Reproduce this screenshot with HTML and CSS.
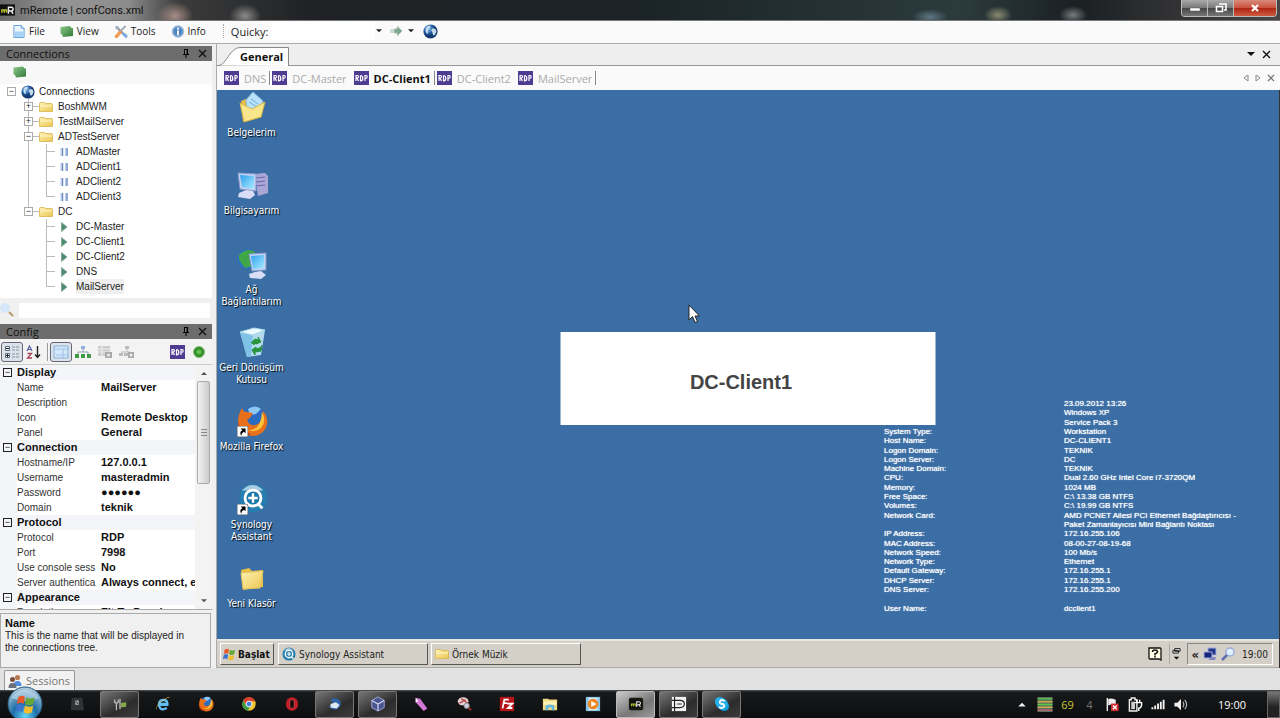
FILE: index.html
```html
<!DOCTYPE html>
<html lang="tr">
<head>
<meta charset="utf-8">
<title>mRemote | confCons.xml</title>
<link rel="stylesheet" href="styles.css">
</head>
<body>
<svg class="sprite" aria-hidden="true">
  <defs>
    <linearGradient id="folder-fill" x1="0" y1="0" x2="1" y2="1"><stop offset="0" stop-color="#fdf3b4"/><stop offset="1" stop-color="#ecc650"/></linearGradient>
    <radialGradient id="globe-fill" cx=".35" cy=".3"><stop offset="0" stop-color="#9fc8f0"/><stop offset=".6" stop-color="#2b66ad"/><stop offset="1" stop-color="#123a70"/></radialGradient>
    <linearGradient id="green-fill" x1="0" y1="0" x2="1" y2="1"><stop offset="0" stop-color="#8cc78a"/><stop offset="1" stop-color="#2f7a35"/></linearGradient>
    <linearGradient id="screen-fill" x1="0" y1="0" x2="1" y2="1"><stop offset="0" stop-color="#2fa0ee"/><stop offset="1" stop-color="#a9ecff"/></linearGradient>
    <radialGradient id="orb-fill" cx=".5" cy=".85" r=".8"><stop offset="0" stop-color="#5fd6f6"/><stop offset=".45" stop-color="#1d6ea8"/><stop offset="1" stop-color="#a9c6d8"/></radialGradient>
  </defs>
  <symbol id="folder" viewBox="0 0 14 12"><path d="M.5 2.5q0-1 1-1h4l1 1h6q1 0 1 1v7h-13z" fill="url(#folder-fill)" stroke="#d9b34d" stroke-width=".8"/><path d="M1 5h12" stroke="#fff6c6"/></symbol>
  <symbol id="globe" viewBox="0 0 14 14"><circle cx="7" cy="7" r="6.600" fill="url(#globe-fill)"/><path d="M2.500 4q1.500-2.500 4-2.600l.4 1.600L4.500 5.500 5 7.500 4 9.500 2.500 7zM9 4l2.600.6 1 2.400-1.400 3-1.700.8-.8-3-1-1.800z" fill="#c4dbec"/></symbol>
  <symbol id="pause" viewBox="0 0 10 10"><path d="M1.500 1h3v8h-3zM6 1h3v8H6z" fill="#b7cbed"/><path d="M3.500 1v8M8 1v8" stroke="#718bbb"/></symbol>
  <symbol id="play" viewBox="0 0 10 10"><path d="M2.500.5 8 5 2.500 9.500z" fill="#4b8b6d" stroke="#87a99a"/></symbol>
  <symbol id="rdp" viewBox="0 0 15 14"><path d="M0 0h15v14H0z" fill="#4d3c91"/><path d="M2 10V4.500h1.500q1 0 1 1.200T3 7l1.500 3M6.500 4.500V10q2.300 0 2.300-2.700T6.500 4.500M11 10V4.500h1.200q1 0 1 1.400T11 7.400" fill="none" stroke="#fff" stroke-width="1.200"/></symbol>
  <symbol id="green-box" viewBox="0 0 14 12"><path d="M.5 1.500 10 .5l1.500 2H13v8L3 11.500 2 9 .5 8z" fill="url(#green-fill)"/></symbol>
  <symbol id="pin" viewBox="0 0 8 9"><path d="M2 0h4v5h1v1H4.500v3h-1V6H1V5h1z"/><path d="M3 1h1.500v4H3z" fill="#858585"/></symbol>
  <symbol id="cross" viewBox="0 0 9 9"><path d="m1 1 7 7M8 1 1 8" fill="none" stroke="currentColor" stroke-width="1.400"/></symbol>
  <symbol id="down" viewBox="0 0 8 5"><path d="M0 0h8L4 4z" fill="currentColor"/></symbol>
  <symbol id="shortcut" viewBox="0 0 9 9"><path d="M0 0h9v9H0z" fill="#fff" stroke="#333" stroke-width=".6"/><path d="M3 2h4v4L5.700 4.700Q3.500 5.500 3.500 8 1.500 5 4.400 3.400z"/></symbol>
  <symbol id="firefox" viewBox="0 0 32 32"><circle cx="17" cy="14" r="12.500" fill="#2c6cc0"/><path d="M12 4q7-5 13 0l-5 5-6 1z" fill="#8cc8f4"/><path d="M6 3q1 4 5 4l6 1-3 5-3 2q2 6 8 5 5-1 7-6l1-8q5 5 4 13-2 11-14 12Q3 30 2 18 2 9 6 3z" fill="#e8701a"/><path d="M26 7q5 9-1 16-6 5-13 2 13 1 14-18z" fill="#fbc43c"/><path d="M2 16q2 11 13 13-8 3-12-5z" fill="#b6350c"/></symbol>
  <symbol id="xp-flag" viewBox="0 0 16 14"><path d="M3 2q3-2 5 0L7 7Q5 5 2 7z" fill="#e35b2b"/><path d="M9 2q3 2 6 0l-1 5q-3 2-6 0z" fill="#65a836"/><path d="M2 8q3-2 5 0l-1 5q-3-2-5 0z" fill="#3c74cf"/><path d="M8 8q3 2 6 0l-1 5q-3 2-6 0z" fill="#f1bd2c"/></symbol>
  <symbol id="syno" viewBox="0 0 32 32"><circle cx="16" cy="16" r="15" fill="#267eaf"/><path d="M4 8Q15-4 27 8z" fill="#a9cbe2"/><circle cx="16" cy="16" r="8.500" fill="#1a78ab" stroke="#fff" stroke-width="3"/><path d="M16 11v10M11 16h10" stroke="#fff" stroke-width="2.600"/><path d="m21 22 5 5" stroke="#fff" stroke-width="3"/></symbol>
  <symbol id="mr" viewBox="0 0 16 12"><path d="M0 0h16v12H0z" fill="#111"/><path d="M2 9V6h5v3M4.500 6v3" fill="none" stroke="#b3bd2b" stroke-width="1.600"/><path d="M9 10V3h3q2 0 2 2t-2 2H9m3 0 2 3" fill="none" stroke="#eee" stroke-width="1.500"/></symbol>
</svg>

<header class="titlebar">
  <svg class="app-mark"><use href="#mr"/></svg>
  <h1>mRemote | confCons.xml</h1>
  <div class="window-buttons">
    <button aria-label="Minimize"><svg viewBox="0 0 12 10"><path d="M1 5h10v3H1z" fill="#fff" stroke="#555" stroke-width=".5"/></svg></button>
    <button aria-label="Restore"><svg viewBox="0 0 12 10"><path d="M4 1h7v6H9M1.500 3.500h6v5h-6z" fill="none" stroke="#fff" stroke-width="1.600"/></svg></button>
    <button class="close" aria-label="Close"><svg viewBox="0 0 12 10"><path d="m3 2 6 6M9 2 3 8" stroke="#fff" stroke-width="2.200"/></svg></button>
  </div>
</header>

<nav class="toolbar">
  <button class="menu"><svg viewBox="0 0 14 14"><path d="M1.500.5h8l3 3v10h-11z" fill="#e9f5ff" stroke="#5b9bd8"/><path d="M2.500 7h9v6h-9z" fill="#a8d2f6"/><path d="M9.500.5v3h3" fill="#fff" stroke="#5b9bd8"/></svg>File</button>
  <button class="menu"><svg><use href="#green-box"/></svg>View</button>
  <button class="menu"><svg viewBox="0 0 14 14"><path d="m3 3 8.500 8.500" stroke="#8e9aaa" stroke-width="2.500"/><path d="M1 1v3l2 1 2-2-1-2M13 13l1-2-2-2-2 2z" fill="#a8b1bd"/><path d="m12 1-7 7" stroke="#9da5b0" stroke-width="2"/><path d="m6 8-4 4.500" stroke="#ef9b56" stroke-width="3.500" stroke-linecap="round"/><path d="m10 10 2.500 2.500" stroke="#7daee6" stroke-width="3" stroke-linecap="round"/></svg>Tools</button>
  <button class="menu"><svg viewBox="0 0 14 14"><circle cx="7" cy="7" r="6.200" fill="#6f9ed2" stroke="#a5bcd6"/><circle cx="7" cy="7" r="4" fill="#4d82c0"/><path d="M7 3v2M7 6v5" stroke="#fff" stroke-width="2"/></svg>Info</button>
  <span class="grip"></span>
  <label for="quicky">Quicky:</label>
  <input id="quicky" type="text">
  <button class="caret" aria-label="Quicky history"><svg><use href="#down"/></svg></button>
  <button class="go" aria-label="Connect"><svg viewBox="0 0 13 10"><path d="M1 3v4M3 3v4" stroke="#9cbfa8"/><path d="M4.500 3h3V.5L12 5 7.500 9.500V7h-3z" fill="#78a98a" stroke="#a4b8ab"/></svg></button>
  <button class="caret" aria-label="Connect options"><svg><use href="#down"/></svg></button>
  <button class="world" aria-label="Protocol"><svg><use href="#globe"/></svg></button>
</nav>

<main class="workspace">
  <aside class="side">
    <section class="panel">
      <header class="panel-head"><h2>Connections</h2><button aria-label="Pin Connections"><svg class="pin"><use href="#pin"/></svg></button><button aria-label="Close Connections"><svg class="x"><use href="#cross"/></svg></button></header>
      <div class="tree-tools"><button aria-label="View options"><svg><use href="#green-box"/></svg></button></div>
      <div class="tree">
        <div class="node root"><button class="toggle" aria-label="Collapse">−</button><svg class="globe"><use href="#globe"/></svg>Connections</div>
        <ul class="folders">
          <li><div class="node"><button class="toggle" aria-label="Expand">+</button><svg class="dir"><use href="#folder"/></svg>BoshMWM</div></li>
          <li><div class="node"><button class="toggle" aria-label="Expand">+</button><svg class="dir"><use href="#folder"/></svg>TestMailServer</div></li>
          <li><div class="node"><button class="toggle" aria-label="Collapse">−</button><svg class="dir"><use href="#folder"/></svg>ADTestServer</div>
            <ul class="leaves">
              <li><svg><use href="#pause"/></svg>ADMaster</li>
              <li><svg><use href="#pause"/></svg>ADClient1</li>
              <li><svg><use href="#pause"/></svg>ADClient2</li>
              <li><svg><use href="#pause"/></svg>ADClient3</li>
            </ul>
          </li>
          <li><div class="node"><button class="toggle" aria-label="Collapse">−</button><svg class="dir"><use href="#folder"/></svg>DC</div>
            <ul class="leaves">
              <li><svg><use href="#play"/></svg>DC-Master</li>
              <li><svg><use href="#play"/></svg>DC-Client1</li>
              <li><svg><use href="#play"/></svg>DC-Client2</li>
              <li><svg><use href="#play"/></svg>DNS</li>
              <li><svg><use href="#play"/></svg><span class="picked">MailServer</span></li>
            </ul>
          </li>
        </ul>
      </div>
      <div class="search"><svg viewBox="0 0 14 14"><circle cx="5" cy="5" r="5" fill="#d4e6f7"/><path d="m9 9 4 4" stroke="#b89a68" stroke-width="2"/></svg><input type="text" aria-label="Search connections"></div>
    </section>

    <section class="panel config">
      <header class="panel-head"><h2>Config</h2><button aria-label="Pin Config"><svg class="pin"><use href="#pin"/></svg></button><button aria-label="Close Config"><svg class="x"><use href="#cross"/></svg></button></header>
      <div class="config-tools">
        <button class="on" aria-label="Categorized"><svg viewBox="0 0 16 14"><path d="M1.500 1.500h4v4h-4zM1.500 8.500h4v4h-4z" fill="#fff" stroke="#5c6b80"/><path d="M2 3.500h3M2 10.500h3M3.500 9v3" stroke="#222"/><path d="M8 2h3M12 2h3M8 5h3M12 5h3M8 9h3M12 9h3M8 12h3M12 12h3" stroke="#8c93a0"/></svg></button>
        <button aria-label="Alphabetical"><svg viewBox="0 0 16 14"><path d="m1 6 2.500-5L6 6M2 4.500h3" fill="none" stroke="#5a62a5" stroke-width="1.200"/><path d="M1.500 8.500h4l-4 4.500h4.500" fill="none" stroke="#a34356" stroke-width="1.300"/><path d="M11.500 1v11M9 9.500l2.500 3 2.500-3" fill="none" stroke="#222" stroke-width="1.400"/></svg></button>
        <span class="rule"></span>
        <button class="on" aria-label="Properties"><svg viewBox="0 0 16 14"><path d="M1 1h14v12H1z" fill="#d3e8fb" stroke="#89b0da"/><path d="M1 4h14M10 4v9M3 10h12" stroke="#9ec2e6"/></svg></button>
        <button aria-label="Inheritance"><svg viewBox="0 0 16 14"><path d="M6 1h4v3H6z" fill="#8daed8"/><path d="M8 4v3M3 9V7h10v2" fill="none" stroke="#8da0b0"/><path d="M0 9h4v4H0zM6 9h4v4H6zM12 9h4v4h-4z" fill="#3f9a43"/></svg></button>
        <button disabled aria-label="Default properties"><svg viewBox="0 0 16 14"><path d="M1 1h12v10H1z" fill="#ccc"/><path d="M1 4h12M1 7h12M5 1v10" stroke="#eee"/><path d="M8 7h7v6H8z" fill="#aaa"/><circle cx="11.500" cy="10" r="1.500" fill="#eee"/></svg></button>
        <button disabled aria-label="Default inheritance"><svg viewBox="0 0 16 14"><path d="M6 1h4v3H6zM0 8h4v3H0zM5 8h4v3H5z" fill="#bbb"/><path d="M8 4v3M2 7h9" stroke="#bbb"/><path d="M9 7h6v6H9z" fill="#aaa"/><circle cx="12" cy="10" r="1.500" fill="#eee"/></svg></button>
        <button class="push" aria-label="Icon"><svg class="rdp"><use href="#rdp"/></svg></button>
        <button aria-label="Host status"><svg viewBox="0 0 14 14"><circle cx="7" cy="7" r="5.500" fill="#2f9124" stroke="#8bb883"/><circle cx="7" cy="7" r="2.500" fill="#62bd52"/></svg></button>
      </div>
      <div class="props">
        <table>
          <colgroup><col class="gutter"><col class="key"><col></colgroup>
          <tbody>
            <tr class="group"><td><button class="fold" aria-label="Collapse Display">−</button></td><th colspan="2">Display</th></tr>
            <tr><td></td><th>Name</th><td>MailServer</td></tr>
            <tr><td></td><th>Description</th><td></td></tr>
            <tr><td></td><th>Icon</th><td>Remote Desktop</td></tr>
            <tr><td></td><th>Panel</th><td>General</td></tr>
            <tr class="group"><td><button class="fold" aria-label="Collapse Connection">−</button></td><th colspan="2">Connection</th></tr>
            <tr><td></td><th>Hostname/IP</th><td>127.0.0.1</td></tr>
            <tr><td></td><th>Username</th><td>masteradmin</td></tr>
            <tr><td></td><th>Password</th><td>●●●●●●</td></tr>
            <tr><td></td><th>Domain</th><td>teknik</td></tr>
            <tr class="group"><td><button class="fold" aria-label="Collapse Protocol">−</button></td><th colspan="2">Protocol</th></tr>
            <tr><td></td><th>Protocol</th><td>RDP</td></tr>
            <tr><td></td><th>Port</th><td>7998</td></tr>
            <tr><td></td><th>Use console sess</th><td>No</td></tr>
            <tr><td></td><th>Server authentica</th><td>Always connect, e</td></tr>
            <tr class="group"><td><button class="fold" aria-label="Collapse Appearance">−</button></td><th colspan="2">Appearance</th></tr>
            <tr><td></td><th>Resolution</th><td>Fit To Panel</td></tr>
          </tbody>
        </table>
        <div class="scroll">
          <button aria-label="Scroll up"><svg class="up"><use href="#down"/></svg></button>
          <div class="thumb"></div>
          <button aria-label="Scroll down"><svg><use href="#down"/></svg></button>
        </div>
      </div>
      <div class="hint"><strong>Name</strong><p>This is the name that will be displayed in the connections tree.</p></div>
    </section>
  </aside>

  <section class="content">
    <div class="group-tabs"><button class="group-tab"><svg viewBox="0 0 72 19" preserveAspectRatio="none"><path d="M0 18.500h2C9 18 13 .5 23 .5h48.500V19" fill="#fff" stroke="#888"/></svg><span>General</span></button>
      <button class="push" aria-label="Panel list"><svg class="tri"><use href="#down"/></svg></button><button aria-label="Close panel"><svg class="x"><use href="#cross"/></svg></button></div>
    <div class="session-tabs">
      <button class="dns"><svg><use href="#rdp"/></svg>DNS</button>
      <button><svg><use href="#rdp"/></svg>DC-Master</button>
      <button class="active"><svg><use href="#rdp"/></svg>DC-Client1</button>
      <button><svg><use href="#rdp"/></svg>DC-Client2</button>
      <button class="last"><svg><use href="#rdp"/></svg>MailServer</button>
      <div class="tab-nav">
        <button aria-label="Previous tab"><svg viewBox="0 0 6 8"><path d="M5 1v6L1 4z" fill="none" stroke="#888"/></svg></button>
        <button aria-label="Next tab"><svg viewBox="0 0 6 8"><path d="M1 1v6l4-3z" fill="none" stroke="#888"/></svg></button>
        <button aria-label="Close tab"><svg class="x"><use href="#cross"/></svg></button>
      </div>
    </div>

    <div class="remote">
      <div class="desktop">
        <div class="shortcuts">
          <a href="#"><svg viewBox="0 0 32 32"><path d="M5 10 17 5l11 9-3 12-18 5z" fill="#e6bd45"/><path d="m10 9 7-8 10 9-2 11-14-1z" fill="#b9e2fa" stroke="#86b4d8"/><path d="m15 8 7 5M13 11l8 5" stroke="#70aedc"/><path d="m4 12 12 6 13-7-4 15-17 5z" fill="#f9e68b" stroke="#d6b246"/></svg>Belgelerim</a>
          <a href="#"><svg viewBox="0 0 32 32"><path d="m19 5 10-1 3 3v17l-10 3z" fill="#aaa7d7"/><path d="m20 9 9-1M20 13l9-1M20 17l9-1" stroke="#6861a5"/><path d="m2 4 18 1v17L4 20z" fill="#c3d4f2" stroke="#8997cb"/><path d="m4 6 14 1v13L6 18z" fill="url(#screen-fill)"/><path d="m10 21 7 1 2 4-5 4-12-2 1-4z" fill="#d9dcf5"/></svg>Bilgisayarım</a>
          <a href="#"><svg viewBox="0 0 32 32"><circle cx="12" cy="11" r="10" fill="#2870c8"/><path d="M3 7q8-8 16-3l-2 14-8 2-6-8z" fill="#3fa747"/><path d="m13 6 17-1v17l-14 1z" fill="#c3d4f2" stroke="#8296c8"/><path d="m15 8 13-1v13l-11 1z" fill="url(#screen-fill)"/><path d="m19 24 6-1 5 4-5 4-11-1-1-4z" fill="#d9dcf5"/></svg>Ağ<br>Bağlantılarım</a>
          <a href="#"><svg viewBox="0 0 32 32"><path d="m4 6 25-2-4 25-14 2z" fill="#c2e7f5" fill-opacity=".9"/><path d="m4 6 13 4-2 20-4 1z" fill="#7fc2e7"/><path d="m4 6 14-4 11 2-12 5z" fill="#eefaff" stroke="#a8d6ea"/><path d="m15 17 4-4 4 1-1-3 3 5-5 2 1-2-3 3m8 0-1 6-6 1v3l-3-5 4-3v2l3-1" fill="#27943e" stroke="#27943e"/></svg>Geri Dönüşüm<br>Kutusu</a>
          <a href="#"><svg viewBox="0 0 32 32"><use href="#firefox"/><use href="#shortcut" x="1" y="21" width="11" height="11"/></svg>Mozilla Firefox</a>
          <a href="#"><svg viewBox="0 0 32 32"><use href="#syno" x="2" width="30" height="30"/><use href="#shortcut" x="1" y="21" width="11" height="11"/></svg>Synology<br>Assistant</a>
          <a href="#"><svg viewBox="0 0 32 32"><path d="m5 8 8-2 3 3 11-1v17L7 28z" fill="#e9bf48"/><path d="m5 11 22-2-3 17-17 1z" fill="url(#folder-fill)" stroke="#e2c461"/></svg>Yeni Klasör</a>
        </div>

        <dl class="sysinfo">
          <dt></dt><dd>23.09.2012 13:26</dd>
          <dt></dt><dd>Windows XP</dd>
          <dt></dt><dd>Service Pack 3</dd>
          <dt>System Type:</dt><dd>Workstation</dd>
          <dt>Host Name:</dt><dd>DC-CLIENT1</dd>
          <dt>Logon Domain:</dt><dd>TEKNIK</dd>
          <dt>Logon Server:</dt><dd>DC</dd>
          <dt>Machine Domain:</dt><dd>TEKNIK</dd>
          <dt>CPU:</dt><dd>Dual 2.60 GHz Intel Core i7-3720QM</dd>
          <dt>Memory:</dt><dd>1024 MB</dd>
          <dt>Free Space:</dt><dd>C:\ 13.38 GB NTFS</dd>
          <dt>Volumes:</dt><dd>C:\ 19.99 GB NTFS</dd>
          <dt>Network Card:</dt><dd>AMD PCNET Ailesi PCI Ethernet Bağdaştırıcısı -</dd>
          <dt></dt><dd>Paket Zamanlayıcısı Mini Bağlantı Noktası</dd>
          <dt>IP Address:</dt><dd>172.16.255.106</dd>
          <dt>MAC Address:</dt><dd>08-00-27-08-19-68</dd>
          <dt>Network Speed:</dt><dd>100 Mb/s</dd>
          <dt>Network Type:</dt><dd>Ethernet</dd>
          <dt>Default Gateway:</dt><dd>172.16.255.1</dd>
          <dt>DHCP Server:</dt><dd>172.16.255.1</dd>
          <dt>DNS Server:</dt><dd>172.16.255.200</dd>
          <dt></dt><dd></dd>
          <dt>User Name:</dt><dd>dcclient1</dd>
        </dl>

        <div class="banner">DC-Client1</div>
        <svg class="cursor" viewBox="0 0 12 20"><path d="M1 1v15l3.500-3.500L7 18.500l2.500-1L7 12h4.500z" fill="#fff" stroke="#222"/></svg>
      </div>

      <div class="xpbar">
        <button class="start"><svg><use href="#xp-flag"/></svg>Başlat</button>
        <button class="task"><svg><use href="#syno"/></svg>Synology Assistant</button>
        <button class="task"><svg><use href="#folder"/></svg>Örnek Müzik</button>
        <button class="push bare" aria-label="Help"><svg viewBox="0 0 14 14"><path d="M1 1h11q1 0 1 1v11l-2-1H2q-1 0-1-1z" fill="#ffffe8" stroke="#111" stroke-width="1.300"/><path d="M4.500 5q0-2 2.500-2t2.500 2Q9 6 7 7v1.500M7 9v1.500" fill="none" stroke="#111" stroke-width="1.500"/></svg></button>
        <button class="bare lang" aria-label="Language bar"><svg viewBox="0 0 10 14"><path d="M3 1h6v3H3zM1 3h6v3H1z" fill="#eee" stroke="#111"/><path d="M2 10h6l-3 3z"/></svg></button>
        <div class="xptray">
          <span>«</span>
          <svg viewBox="0 0 14 14"><path d="M5 1h8v7H5z" fill="#25348d" stroke="#a6afd9"/><path d="M1 5h8v6H1z" fill="#17247c" stroke="#a6afd9"/><path d="M5 13h7l1-3H9z" fill="#7f89c0"/></svg>
          <svg viewBox="0 0 14 14"><circle cx="9" cy="5" r="4" fill="#dff0ff" stroke="#9badda" stroke-width="1.500"/><path d="m6 8-5 5" stroke="#5e6eae" stroke-width="2.500"/></svg>
          <time>19:00</time>
        </div>
      </div>
    </div>
  </section>
</main>

<div class="sessions"><button><svg viewBox="0 0 14 14"><circle cx="9.500" cy="3.500" r="2.600" fill="#b77a4e"/><path d="M5.500 12q0-5 4-5t4 5z" fill="#4d8ede"/><circle cx="4.500" cy="5.500" r="2.500" fill="#77503b"/><path d="M.5 14q0-5 4-5t4 5z" fill="#69717d"/></svg>Sessions</button></div>

<footer class="taskbar">
  <button class="orb" aria-label="Start"><svg viewBox="0 0 36 36"><circle cx="18" cy="18" r="17" fill="url(#orb-fill)" stroke="#24597c"/><path d="M4 12Q18-5 32 12q-13 6-28 0z" fill="#d9eef8" opacity=".45"/><use href="#xp-flag" x="7" y="8" width="22" height="20"/></svg></button>
  <div class="apps">
    <button aria-label="Tablet"><svg viewBox="0 0 18 18"><path d="M3 2h12l2 14H2z" fill="#303236"/><path d="M7 5h4v5H7z" fill="#a4a7ab"/><path d="m8 6 2 3" stroke="#333"/></svg></button>
    <button class="open" aria-label="Connector"><svg viewBox="0 0 18 18"><path d="M3 4v3q2 2 4 0V4M5 7v9M9 3v12" fill="none" stroke="#bbb" stroke-width="1.500"/><path d="m10 8 6-1v5l-6 1z" fill="#87a94c"/></svg></button>
    <button aria-label="Internet Explorer"><svg viewBox="0 0 18 18"><path d="M15 10H4.500Q5 15 9 15q3 0 4-2M4.500 9q.5-4.500 5-4.500Q14 4.500 14 9z" fill="none" stroke="#62bdf0" stroke-width="2.600"/><path d="M1.500 16Q0 11 8 5t9-3q-1-1-5 1Q1 9 1.500 16z" fill="#f3c13b"/></svg></button>
    <button aria-label="Firefox"><svg><use href="#firefox"/></svg></button>
    <button aria-label="Chrome"><svg viewBox="0 0 18 18"><circle cx="9" cy="9" r="7.500" fill="#f2c62e"/><path d="M2.500 5.200A7.500 7.500 0 0 1 16 6H9L6 10z" fill="#da3e2f"/><path d="M2.500 5.200 6 11l4 1-2 4.400a7.500 7.500 0 0 1-5.500-11.200z" fill="#379d48"/><circle cx="9" cy="9" r="3.300" fill="#4280d8" stroke="#fff"/></svg></button>
    <button aria-label="Opera"><svg viewBox="0 0 18 18"><ellipse cx="9" cy="9" rx="7" ry="7.700" fill="#c11d25"/><ellipse cx="9" cy="9" rx="2.600" ry="5.200" fill="#1a0d0d" stroke="#e96a6a" stroke-width=".6"/></svg></button>
    <button class="open" aria-label="Thunderbird"><svg viewBox="0 0 18 18"><path d="M4 4q7-4 11 2 2 6-4 9-7 1-9-4 4 2 7-1-4-3-5-6z" fill="#2e65a8"/><path d="m4 9 6-2 4 3-3 4-7-1z" fill="#dfe7ef"/></svg></button>
    <button class="open" aria-label="VirtualBox"><svg viewBox="0 0 18 18"><path d="m9 1 7 4v8l-7 4-7-4V5z" fill="#4a558f" stroke="#a8b0de"/><path d="m2 5 7 4 7-4M9 9v8" fill="none" stroke="#d1d5f0" stroke-width="1.400"/></svg></button>
    <button aria-label="Editor"><svg viewBox="0 0 18 18"><path d="m3 2 5 1 8 11-4 3L3 7z" fill="#d477d5"/><path d="m3 2 3 4-3 1z" fill="#fff"/></svg></button>
    <button aria-label="Snipping Tool"><svg viewBox="0 0 18 18"><ellipse cx="8" cy="6" rx="6" ry="4.500" fill="#e8d4d4"/><path d="m4 8 7-4M6 3l7 5" stroke="#b54848" stroke-width="1.500"/><circle cx="12" cy="11" r="3" fill="#ccd" stroke="#888"/><path d="m14 13 3 3" stroke="#a33" stroke-width="2"/></svg></button>
    <button aria-label="FileZilla"><svg viewBox="0 0 18 18"><path d="M1 1h16v16H1z" fill="#b7141a"/><path d="m4 14 2-10h5M5 8h4M9 8.500h6l-5 5h5" fill="none" stroke="#fff" stroke-width="2"/></svg></button>
    <button aria-label="Explorer"><svg viewBox="0 0 18 18"><path d="M1 3h6l1 1h9v12H1z" fill="#efd981"/><path d="M2 6h14v4H2z" fill="#fff2b6"/><path d="M4 16v-5q5-3 10 0v5h-3v-3H7v3z" fill="#69b7df"/></svg></button>
    <button aria-label="Media Player"><svg viewBox="0 0 18 18"><path d="M1 1h16v16H1z" fill="#86c4ea"/><path d="M4 2h10v14H4z" fill="#d6edf9"/><circle cx="9" cy="9" r="6" fill="#ef8523"/><path d="M7 5.500v7L13 9z" fill="#fff"/></svg></button>
    <button class="open current" aria-label="mRemote"><svg viewBox="0 0 18 18"><rect x="1" y="2" width="16" height="14" rx="2" fill="#171b0e"/><use href="#mr" x="2" y="4" width="14" height="10"/></svg></button>
    <button class="open" aria-label="Camtasia"><svg viewBox="0 0 18 18"><path d="M1 1h16v16H1z" fill="#f2f2f2"/><path d="M4 1v16M1 5h6M1 13h6M7 5h3q5 0 5 4t-5 4H7M7 9h5" fill="none" stroke="#222" stroke-width="1.300"/></svg></button>
    <button class="open" aria-label="Skype"><svg viewBox="0 0 18 18"><circle cx="6.500" cy="6.500" r="5.500" fill="#24aee8"/><circle cx="11.500" cy="11.500" r="5.500" fill="#1297d6"/><circle cx="9" cy="9" r="6.500" fill="#23b0ec"/><path d="M12 6q-1-1.500-3-1.500T6.500 6.500 9 9t2.500 2.200T9 13.500 6 12" fill="none" stroke="#fff" stroke-width="2"/></svg></button>
  </div>
  <div class="tray">
    <svg viewBox="0 0 16 16"><path d="m4 10 4-4 4 4z" fill="#eee"/></svg>
    <svg viewBox="0 0 16 16"><path d="M0 0h16v16H0z" fill="#57735b"/><path d="M0 2h16M0 8h16" stroke="#5bc94a" stroke-width="1.500"/><path d="M0 5h16M0 11h16" stroke="#d5a64a" stroke-width="1.500"/><path d="M0 14h16" stroke="#c55f78" stroke-width="1.500"/></svg>
    <span class="temp">69</span>
    <span class="dim">4</span>
    <svg viewBox="0 0 16 16"><path d="M3 1v14" stroke="#eee" stroke-width="1.500"/><path d="M4 2q3-1 8 1v6Q8 7 4 9z" fill="#eee"/><path d="M7 7h8v8H7z" fill="#d22d32"/><path d="m9 9 4 4M13 9l-4 4" stroke="#fff" stroke-width="1.400"/></svg>
    <svg viewBox="0 0 16 16"><path d="M2 3h2V1h4v2h2v12H2z" fill="none" stroke="#eee" stroke-width="1.500"/><path d="M4 5h4v8H4z" fill="#ccc"/><path d="M8 6h7v3q-1 3-3 3v3M10 3v3M13 3v3" fill="none" stroke="#fff" stroke-width="1.500"/></svg>
    <svg viewBox="0 0 16 16"><path d="M2 13v-2M5 13v-4M8 13V7M11 13V5M14 13V3" stroke="#f2f2f2" stroke-width="2"/></svg>
    <svg viewBox="0 0 16 16"><path d="M1 6h3l4-4v12l-4-4H1z" fill="#eee"/><path d="M10 5q2 3 0 6M12 3q4 5 0 10" fill="none" stroke="#bbb" stroke-width="1.200"/></svg>
  </div>
  <time class="clock">19:00</time>
  <button class="peek" aria-label="Show desktop"></button>
</footer>
</body>
</html>
```
FILE: styles.css
```css
* { box-sizing: border-box; }

html, body { height: 100%; }

body {
  margin: 0;
  display: flex;
  flex-direction: column;
  overflow: hidden;
  background: #e1e1e1;
  color: #222;
  font: 11px/15px "Open Sans", "Noto Sans", sans-serif;
}

button {
  margin: 0;
  padding: 0;
  border: 0;
  background: none;
  color: inherit;
  font: inherit;
  display: flex;
  align-items: center;
}

input { min-width: 0; border: 0; padding: 0; outline: 0; font: inherit; }
h1, h2, p, ul, dl, dd { margin: 0; padding: 0; }
ul { list-style: none; }
svg { display: block; flex: none; }
.sprite { position: absolute; width: 0; height: 0; }
.push { margin-left: auto; }
.x { width: 9px; height: 9px; }

/* Window title */
.titlebar {
  flex: none;
  height: 21px;
  display: flex;
  align-items: center;
  border-bottom: 1px solid #777;
  background:
    radial-gradient(ellipse 18px 14px at 175px 16px, #a88d88, transparent),
    radial-gradient(ellipse 16px 12px at 245px 16px, #8b8b88, transparent),
    radial-gradient(ellipse 18px 8px at 930px 17px, #5f7884, transparent),
    radial-gradient(ellipse 14px 9px at 998px 15px, #8a8a70, transparent),
    radial-gradient(ellipse 14px 9px at 1073px 15px, #777b7c, transparent),
    linear-gradient(90deg, #6a6a6a, #959595 5%, #8c8c8c 10%, #3c3c3c 14%, #202225 24%, #1b2327 50%, #2b3b3d 75%, #1b2023 84%, #4a4545);
}
.titlebar h1 { margin-left: 5px; color: #111; font: 11px/15px Roboto, "Open Sans", sans-serif; }
.app-mark { width: 15px; height: 12px; }
.window-buttons { margin-left: auto; margin-right: 3px; align-self: flex-start; display: flex; height: 17px; border: 1px solid #bbb; border-top: 0; border-radius: 0 0 4px 4px; overflow: hidden; }
.window-buttons button { width: 26px; justify-content: center; background: linear-gradient(#aaa, #777 50%, #444 50%, #777); border-right: 1px solid #bbb; }
.window-buttons .close { width: 42px; border: 0; background: linear-gradient(#d98a7c, #c9503c 50%, #ad2412 50%, #cf5b40); }
.window-buttons svg { width: 12px; height: 10px; }

/* Menu strip */
.toolbar { flex: none; height: 23px; display: flex; align-items: center; padding: 0 0 2px 12px; background: #fafafa; border-bottom: 1px solid #aaa; }
.menu { gap: 3px; margin-right: 15px; font-size: 10px; }
.menu svg { width: 14px; height: 13px; }
.grip { width: 1px; height: 14px; margin-left: 2px; border-left: 1px dotted #aaa; }
.toolbar label { margin-left: 7px; }
#quicky { flex: none; width: 104px; margin-left: 3px; background: #fff; height: 18px; }
.caret { width: 8px; justify-content: center; }
.caret svg { width: 6px; height: 4px; }
.go { margin: 0 4px 0 7px; }
.go svg { width: 13px; height: 10px; }
.world { margin-left: 8px; }
.world svg { width: 15px; height: 15px; }

/* Workspace */
.workspace { flex: 1; min-height: 0; display: grid; grid-template-columns: 212px 1fr; column-gap: 4px; background: #f0f0f0; }
.side { min-height: 0; padding-top: 2px; display: grid; grid-template-rows: 278fr 343fr; }
.panel { min-height: 0; display: flex; flex-direction: column; }
.panel-head { flex: none; height: 15px; display: flex; align-items: center; gap: 8px; padding: 0 5px 0 6px; background: #6d6d6d; color: #111; }
.panel-head h2 { margin-right: auto; font-size: 11px; font-weight: 400; }
.pin { width: 8px; height: 9px; }

.tree-tools { flex: none; height: 23px; padding: 5px 0 0 13px; background: #f8f8f8; }
.tree-tools svg { width: 14px; height: 12px; }
.tree, .props, .hint { font-family: "Liberation Sans", Arial, sans-serif; font-size: 10px; }
.tree { flex: 1; min-height: 0; overflow: hidden; padding-left: 7px; background: #fff; }
.node { height: 15px; display: flex; align-items: center; }
.toggle { flex: none; width: 9px; height: 9px; border: 1px solid #aaa; background: #fff; justify-content: center; font: 9px/7px "Liberation Sans", sans-serif; color: #333; }
.globe { width: 14px; height: 14px; margin: 0 4px 0 5px; }
.dir { width: 14px; height: 12px; margin-right: 5px; margin-left: 6px; }
.folders { padding-left: 17px; }
.folders > li { background: linear-gradient(#bbb, #bbb) 4px 0 / 1px 100% no-repeat; }
.folders > li:last-child { background-size: 1px 8px; }
.folders .node { background: linear-gradient(#bbb, #bbb) 9px 7px / 6px 1px no-repeat; }
.leaves { padding-left: 22px; }
.leaves li {
  height: 15px;
  display: flex;
  align-items: center;
  gap: 7px;
  padding-left: 13px;
  background: linear-gradient(#bbb, #bbb) 0 0 / 1px 100% no-repeat, linear-gradient(#bbb, #bbb) 0 7px / 9px 1px no-repeat;
}
.leaves li:last-child { background-size: 1px 8px, 9px 1px; }
.leaves svg { width: 10px; height: 10px; }
.picked { background: #efefef; }
.search { flex: none; height: 26px; display: flex; align-items: flex-start; gap: 5px; padding: 5px 2px 5px 0; background: #f0f0f0; }
.search svg { width: 14px; height: 14px; }
.search input { flex: 1; height: 15px; background: #fff; }

/* Property grid */
.config-tools { flex: none; height: 26px; display: flex; align-items: center; padding: 0 2px 0 1px; background: #f3f3f3; border-bottom: 1px solid #ccc; }
.config-tools button { width: 22px; height: 20px; justify-content: center; border-radius: 3px; }
.config-tools .on { border: 1px solid #667; background: #dbe2ea; }
.config-tools svg { width: 16px; height: 14px; }
.config-tools .rdp { width: 15px; height: 14px; }
.rule { width: 1px; height: 18px; margin: 0 2px; background: #999; }
.props { flex: 1; min-height: 0; display: flex; overflow: hidden; background: #fff; border-bottom: 1px solid #aaa; }
.props table { flex: 1; width: 0; table-layout: fixed; border-collapse: collapse; align-self: flex-start; }
.gutter { width: 17px; }
.key { width: 81px; }
.props tr { height: 15px; }
.props th, .props td { height: 15px; padding: 0; line-height: 15px; text-align: left; white-space: nowrap; overflow: hidden; }
.props th { font-weight: 400; color: #333; }
.props td + th + td { padding-left: 3px; font: bold 11px/15px "Liberation Sans", Arial, sans-serif; color: #111; }
.props .group { background: #f3f5f9; }
.props .group th { font: bold 11px/15px "Liberation Sans", Arial, sans-serif; color: #111; }
.props td:first-child { background: #f3f5f9; }
.fold { width: 9px; height: 9px; margin-left: 3px; border: 1px solid #222; justify-content: center; font: 9px/7px "Liberation Sans", sans-serif; }
.scroll { width: 17px; display: flex; flex-direction: column; background: #f3f3f3; }
.scroll button { height: 16px; justify-content: center; color: #555; }
.scroll svg { width: 6px; height: 4px; }
.scroll .up { transform: rotate(180deg); }
.thumb { height: 103px; margin: 0 2px auto; border: 1px solid #aaa; border-radius: 2px; background: repeating-linear-gradient(#888 0 1px, transparent 1px 3px) center / 6px 7px no-repeat, linear-gradient(90deg, #f2f2f2, #ccc); }
.hint { flex: none; height: 55px; margin: 3px 1px 0 0; padding: 2px 16px 2px 4px; border: 1px solid #aaa; color: #222; line-height: 12px; }
.hint strong { display: block; font: bold 11px/14px "Liberation Sans", Arial, sans-serif; color: #111; }

/* Session area */
.content { min-width: 0; min-height: 0; display: flex; flex-direction: column; border-left: 1px solid #aaa; }
.group-tabs { flex: none; height: 22px; display: flex; align-items: center; gap: 7px; padding-right: 9px; border-bottom: 1px solid #999; background: #eee; color: #111; }
.group-tab { position: relative; align-self: flex-end; width: 72px; height: 19px; margin-bottom: -1px; }
.group-tab svg { position: absolute; inset: 0; width: 100%; height: 100%; }
.group-tab span { position: relative; padding-left: 23px; font-weight: 700; }
.tri { width: 8px; height: 5px; }
.session-tabs { flex: none; height: 24px; display: flex; align-items: center; padding-left: 7px; background: #fafafa; color: #aaa; }
.session-tabs > button { gap: 5px; padding-right: 3px; margin-right: 4px; height: 14px; }
.session-tabs > button > svg { width: 15px; height: 14px; }
.session-tabs .dns { border-right: 1px solid #888; margin-right: 2px; }
.session-tabs .active { color: #111; font-weight: 700; border-right: 1px solid #888; margin-right: 2px; }
.session-tabs .last { border-right: 1px solid #888; }
.tab-nav { margin-left: auto; display: flex; gap: 6px; padding-right: 5px; color: #777; }
.tab-nav svg { width: 6px; height: 8px; }
.tab-nav .x { width: 8px; }

.remote { flex: 1; min-height: 0; display: flex; flex-direction: column; border-right: 1px solid #333; font-family: "DejaVu Sans Condensed", "DejaVu Sans", sans-serif; font-size: 10px; }
.desktop { position: relative; flex: 1; min-height: 0; background: #3a6ea5; }
.shortcuts { width: 69px; height: 100%; display: grid; grid-template-rows: repeat(7, 1fr); }
.shortcuts a { display: block; min-height: 0; padding-top: 1px; color: #fff; text-align: center; text-decoration: none; line-height: 12px; white-space: nowrap; text-shadow: 1px 1px 1px #000; }
.shortcuts svg { width: 32px; height: 32px; margin: 0 auto 4px; }
.sysinfo { position: absolute; right: 50px; bottom: 26px; width: 345px; height: 214px; display: grid; grid-template-columns: 180px 1fr; grid-auto-rows: 1fr; color: #fff; font: 8px/9px "Liberation Sans", Arial, sans-serif; text-shadow: 0 0 1px #fff; white-space: nowrap; }
.sysinfo dt, .sysinfo dd { min-height: 0; }
.banner { position: absolute; left: 50%; top: 242px; width: 375px; height: 93px; transform: translateX(-50%); display: flex; align-items: center; justify-content: center; padding: 6px 14px 0 0; background: #fff; color: #444; font: bold 20px/24px "Liberation Sans", Arial, sans-serif; }
.cursor { position: absolute; left: 471px; top: 214px; width: 12px; height: 20px; }

.xpbar { flex: none; height: 29px; display: flex; align-items: center; gap: 3px; padding: 0 6px 0 3px; background: #d4d0c8; border-top: 2px solid #e8e6e0; border-bottom: 1px solid #aaa; color: #222; }
.xpbar > button { height: 22px; gap: 3px; border: 1px solid; border-color: #fff #555 #555 #fff; padding: 0 3px; }
.xpbar .start { width: 54px; font-weight: 700; gap: 2px; padding: 0 1px; margin-right: 1px; color: #111; }
.xpbar .task { width: 150px; }
.xpbar svg { width: 14px; height: 14px; }
.xpbar .push { margin-left: auto; }
.xpbar .bare { border-color: transparent; }
.xpbar .lang { border-left-color: #aaa; padding: 0 2px; }
.xpbar .lang svg { width: 9px; }
.xptray { height: 22px; display: flex; align-items: center; gap: 4px; padding: 0 4px; border: 1px solid; border-color: #888 #fff #fff #888; }
.xptray span { font-size: 13px; font-weight: 700; }
.xptray time { margin-left: 3px; }

/* Docked tab strip */
.sessions { flex: none; height: 22px; padding: 2px 0 0 4px; display: flex; background: #e1e1e1; color: #777; }
.sessions button { gap: 4px; padding: 0 4px 0 3px; border: 1px solid #999; border-bottom: 0; border-radius: 2px 2px 0 0; background: #f2f2f2; }
.sessions svg { width: 14px; height: 14px; }

/* Host taskbar */
.taskbar { position: relative; flex: none; height: 28px; display: flex; align-items: center; padding-left: 6px; background: linear-gradient(#55585a, #17191b 2px, #0c0d0e); color: #fff; }
.orb { width: 36px; height: 36px; margin: -1px 14px 0 1px; }
.orb svg { width: 36px; height: 36px; }
.apps { display: flex; gap: 4px; }
.apps button { width: 39px; height: 27px; justify-content: center; }
.apps svg { width: 16px; height: 16px; }
.apps .open { border: 1px solid #777; border-radius: 2px; background: linear-gradient(150deg, #777, #2c2c2c 60%, #3c3c3c); }
.apps .current { border-color: #bbb; background: linear-gradient(150deg, #ccc, #777 60%, #999); }
.tray { margin-left: auto; display: flex; align-items: center; gap: 7px; }
.tray svg { width: 16px; height: 15px; }
.temp, .dim { width: 15px; text-align: center; color: #c9c832; }
.dim { color: #777; }
.clock { width: 26px; margin: 0 23px 0 29px; white-space: nowrap; }
.peek { width: 13px; height: 27px; border: 1px solid #666; background: linear-gradient(#777, #222 60%); }
```
